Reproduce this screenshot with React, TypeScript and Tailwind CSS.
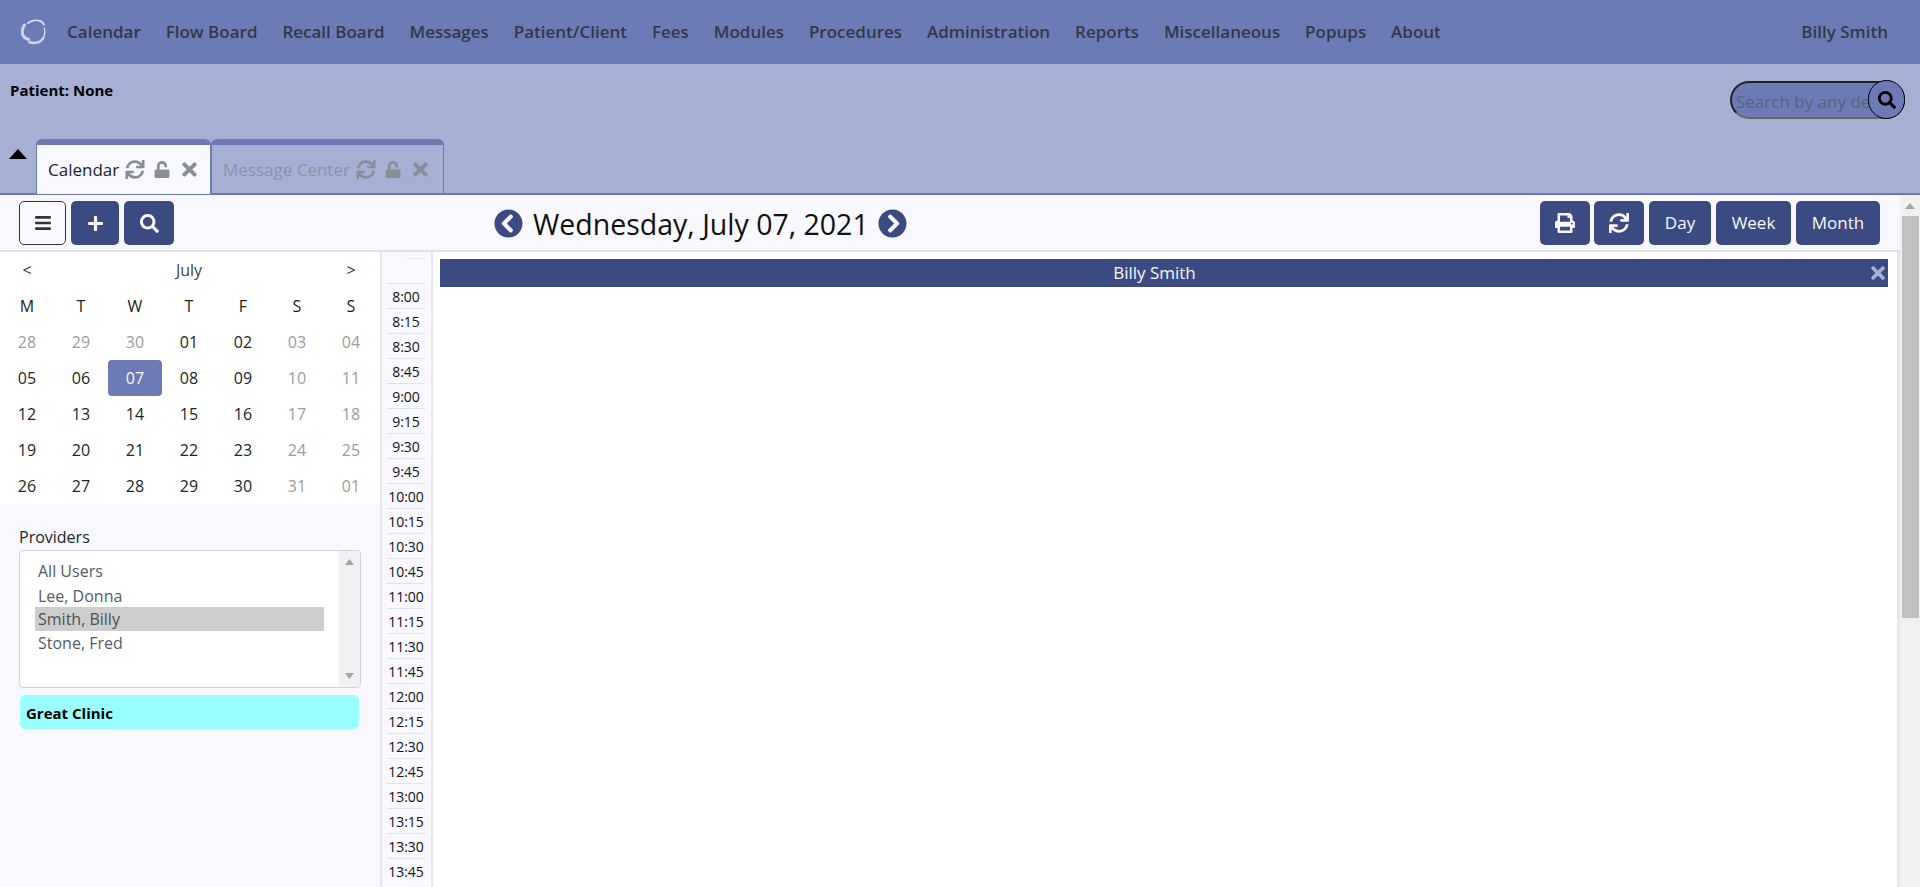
import React from "react";
import { FaSync, FaUnlock, FaTimes, FaBars, FaPlus, FaSearch, FaPrint, FaChevronCircleLeft, FaChevronCircleRight } from "react-icons/fa";

const nav = ["Calendar", "Flow Board", "Recall Board", "Messages", "Patient/Client", "Fees", "Modules", "Procedures", "Administration", "Reports", "Miscellaneous", "Popups", "About"];
const weeks = [
  [["28", 1], ["29", 1], ["30", 1], ["01", 0], ["02", 0], ["03", 1], ["04", 1]],
  [["05", 0], ["06", 0], ["07", 2], ["08", 0], ["09", 0], ["10", 1], ["11", 1]],
  [["12", 0], ["13", 0], ["14", 0], ["15", 0], ["16", 0], ["17", 1], ["18", 1]],
  [["19", 0], ["20", 0], ["21", 0], ["22", 0], ["23", 0], ["24", 1], ["25", 1]],
  [["26", 0], ["27", 0], ["28", 0], ["29", 0], ["30", 0], ["31", 1], ["01", 1]],
] as [string, number][][];
const times: string[] = [];
for (let h = 8; h < 14; h++) for (const m of ["00", "15", "30", "45"]) times.push(`${h}:${m}`);

function Logo() {
  return (
    <svg width="26" height="26" viewBox="0 0 26 26" fill="none" className="ml-[2px]">
      <path d="M3.5 6C1.5 9 .8 12.5 1.6 15.5c.8 2.500 3 4.200 6.200 5" stroke="#cfd4e8" strokeWidth="3" strokeLinecap="round" />
      <path d="M7 4C10 1.800 14 .8 17.500 1.500c2.500 .5 4.500 2 5.500 4.200" stroke="#dfe2f0" strokeWidth="1.700" strokeLinecap="round" />
      <path d="M23.500 9c.6 3 .4 6-.6 8.500" stroke="#dfe2f0" strokeWidth="1.200" strokeLinecap="round" />
      <path d="M22.500 18.500c-1.500 3-4.500 5-8 5.300-2 .2-4 0-6-.6" stroke="#cfd4e8" strokeWidth="2.600" strokeLinecap="round" />
    </svg>
  );
}

function Tab({ label, active, width }: { label: string; active?: boolean; width: string }) {
  const c = active ? "text-[#212529]" : "text-[#8a92a8]";
  return (
    <div className={`${width} border-t-[6px] border-x border-[#6c7bb6] rounded-t-[6px] flex items-center pl-[11px] ${active ? "bg-[#f8f8fe] h-[55px] -mb-px border-b-0" : "h-[54px] pt-[1px]"}`}>
      <span className={`text-[17px] ${c}`}>{label}</span>
      <FaSync className="text-[#868e96] w-[20px] h-[19px] ml-[6px]" />
      <FaUnlock className="text-[#868e96] w-[18px] h-[17px] ml-[8px]" />
      <FaTimes className="text-[#868e96] w-[15px] h-[21px] ml-[11px]" />
    </div>
  );
}

function Btn({ w, children }: { w: string; children: React.ReactNode }) {
  return <button className={`${w} h-[44px] rounded-[5px] bg-[#3b4b82] text-[#f8f8fe] text-[17px] flex items-center justify-center`}>{children}</button>;
}

export default function App() {
  return (
    <div className="h-[887px] w-[1920px] overflow-hidden flex flex-col bg-[#f8f8fe] text-[#212529]" style={{ fontFamily: '"Open Sans", "Noto Sans", sans-serif' }}>
      <header className="h-[64px] bg-[#6c7bb6] flex items-center pl-[19px] shrink-0">
        <Logo />
        <nav className="flex ml-[20px] flex-1 text-[17px] font-semibold text-[#333844]">
          {nav.map((n) => (
            <span key={n} className="mr-[24.9px] whitespace-nowrap">{n}</span>
          ))}
        </nav>
        <span className="font-semibold text-[17px] text-[#333844] mr-[32px]">Billy Smith</span>
      </header>

      <section className="h-[131px] shrink-0 bg-[#a5b0d4] border-b-2 border-[#6c7bb6] flex flex-col relative">
        <div className="flex justify-between pl-[10px] pr-[15px] flex-1">
          <span className="text-[15px] font-bold text-black mt-[16px] leading-[20px]">Patient: None</span>
          <div className="relative w-[175px] h-[38px] mt-[17px]">
            <div className="w-full h-full rounded-full bg-[#6c7bb6] border-2 border-[#222] border-b-[#666] pl-[4px] text-[17px] leading-[38px] text-[#5b627c] overflow-hidden whitespace-nowrap">Search by any de</div>
            <div className="absolute right-0 -top-px w-[37px] h-[39px] rounded-full bg-[#6c7bb6] border border-black flex items-center justify-center">
              <FaSearch className="text-black w-[18px] h-[18px]" />
            </div>
          </div>
        </div>
        <div className="flex items-end h-[54px] pl-[9px]">
          <svg width="18" height="10" viewBox="0 0 18 10" className="mb-[34px] mr-[9px]"><path d="M9 0L18 10H0Z" fill="#000" /></svg>
          <Tab label="Calendar" active width="w-[175px]" />
          <Tab label="Message Center" width="w-[233px]" />
        </div>
      </section>

      <section className="h-[57px] shrink-0 flex items-center border-b-2 border-[#dee2e6] pl-[19px] pr-[40px] pt-[1px]">
        <div className="flex gap-[5px]">
          <button className="w-[47px] h-[44px] rounded-[5px] bg-[#f8f8fe] border border-[#333] flex items-center justify-center"><FaBars className="w-[16px] h-[18px] text-[#333]" /></button>
          <Btn w="w-[48px]"><FaPlus className="w-[17px] h-[17px]" /></Btn>
          <Btn w="w-[50px]"><FaSearch className="w-[19px] h-[19px]" /></Btn>
        </div>
        <div className="flex items-center ml-[320px] flex-1">
          <FaChevronCircleLeft className="w-[29px] h-[29px] text-[#3b4b82]" />
          <span className="text-[28.5px] text-[#111] ml-[10px] mr-[9px] mt-[1px] whitespace-nowrap leading-[38px]">Wednesday, July 07, 2021</span>
          <FaChevronCircleRight className="w-[29px] h-[29px] text-[#3b4b82]" />
        </div>
        <div className="flex gap-[4px]">
          <Btn w="w-[50px]"><FaPrint className="w-[20px] h-[20px]" /></Btn>
          <Btn w="w-[50px] mr-[1px]"><FaSync className="w-[20px] h-[20px]" /></Btn>
          <Btn w="w-[62px] mr-[1px]">Day</Btn>
          <Btn w="w-[75px] mr-[1px]">Week</Btn>
          <Btn w="w-[84px]">Month</Btn>
        </div>
      </section>

      <div className="flex flex-1 min-h-0">
        <aside className="w-[380px] shrink-0 flex flex-col">
          <div className="bg-white h-[252px] text-[16px]">
            <div className="grid grid-cols-7 w-[378px] h-[36px] items-center text-center text-[#333]">
              <span>&lt;</span>
              <span className="col-span-5 text-[#444]">July</span>
              <span>&gt;</span>
            </div>
            <div className="grid grid-cols-7 w-[378px] text-center h-[36px] items-center text-[#222]">
              {["M", "T", "W", "T", "F", "S", "S"].map((d, i) => <span key={i}>{d}</span>)}
            </div>
            {weeks.map((row, i) => (
              <div key={i} className="grid grid-cols-7 w-[378px] h-[36px] text-center">
                {row.map(([d, k], j) => (
                  <span key={j} className={`flex items-center justify-center rounded-[4px] ${k === 2 ? "bg-[#6c7bb6] text-[#f8f8fe]" : k === 1 ? "text-[#999ca3]" : "text-[#212529]"}`}>{d}</span>
                ))}
              </div>
            ))}
          </div>
          <div className="pl-[19px] pt-[21px] text-[16px]">
            <div className="leading-[24px] h-[25px]">Providers</div>
            <div className="w-[342px] h-[138px] bg-white border border-[#ced4da] rounded-[4px] flex overflow-hidden">
              <ul className="flex-1 pl-[15px] pt-[7px] text-[#555b63]">
                <li className="w-[289px] h-[25px] leading-[27px] px-[3px]">All Users</li>
                <li className="w-[289px] h-[24px] leading-[27px] px-[3px]">Lee, Donna</li>
                <li className="w-[289px] h-[24px] leading-[24px] px-[3px] bg-[#cdcdcd] text-[#4b5058]">Smith, Billy</li>
                <li className="w-[289px] h-[24px] leading-[25px] px-[3px]">Stone, Fred</li>
              </ul>
              <div className="w-[21px] bg-[#f1f1f1] flex flex-col items-center justify-between py-[8px]">
                <svg width="9" height="6" viewBox="0 0 9 6"><path d="M4.5 0L9 6H0Z" fill="#a3a3a3" /></svg>
                <svg width="9" height="6" viewBox="0 0 9 6"><path d="M4.5 6L9 0H0Z" fill="#a3a3a3" /></svg>
              </div>
            </div>
            <div className="w-[339px] h-[34px] ml-px mt-[7px] rounded-[5px] bg-[#99ffff] pl-[6px] text-[15px] font-bold text-black leading-[36px]">Great Clinic</div>
          </div>
        </aside>

        <main className="flex-1 flex min-w-0 bg-white border-l-2 border-r-[3px] border-[#e4e7ef]">
          <div className="w-[51px] h-full overflow-hidden shrink-0 border-r-2 border-[#e4e7ef] pl-[5px] bg-[#f8f8fe] pt-[6px]">
            <div className="w-[18px] ml-[20px] border-t border-[#e6e6ee] h-[25px]" />
            {times.map((t) => (
              <div key={t} className="w-[38px] h-[25px] border-t border-[#dfe2ea] text-[14px] leading-[25px] text-center text-[#111] whitespace-nowrap">{t}</div>
            ))}
          </div>
          <div className="flex-1 pl-[7px] pr-[9px] pt-[7px] min-w-0">
            <div className="h-[28px] bg-[#3b4b82] text-[#f8f8fe] text-[17px] flex items-center justify-center relative pr-[19px]">
              Billy Smith
              <FaTimes className="absolute right-[3px] top-[4px] w-[14px] h-[20px] text-[#a5b0d4]" />
            </div>
          </div>
        </main>

        <div className="w-[20px] shrink-0 -mt-[57px] bg-[#f1f1f1] flex flex-col items-center relative">
          <svg width="10" height="6" viewBox="0 0 10 6" className="mt-[8px]"><path d="M5 0L10 6H0Z" fill="#a3a3a3" /></svg>
          <div className="w-[17px] h-[402px] bg-[#c1c1c1] mt-[7px]" />
        </div>
      </div>
    </div>
  );
}
